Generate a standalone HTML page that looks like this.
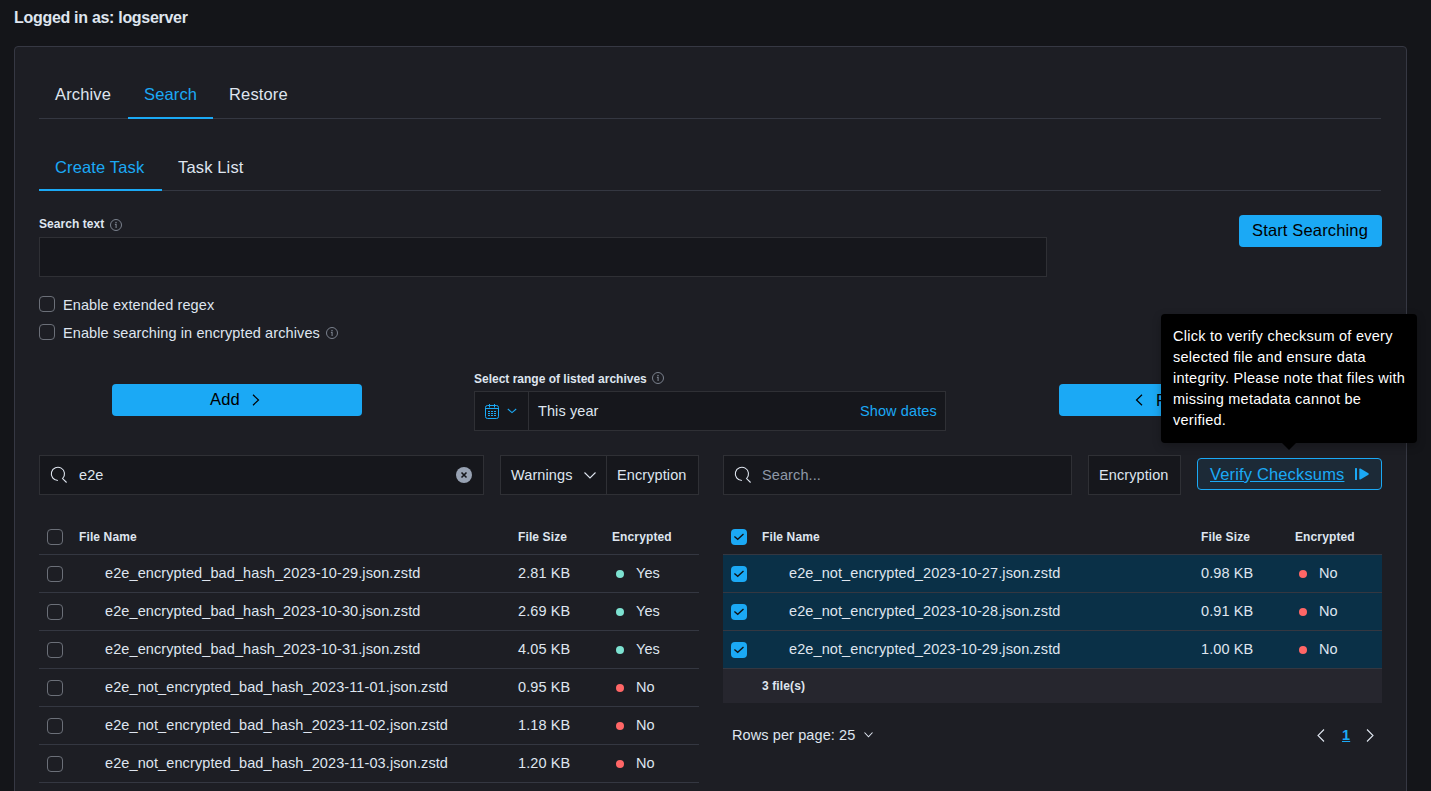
<!DOCTYPE html>
<html><head><meta charset="utf-8">
<style>
*{box-sizing:border-box;margin:0;padding:0}
html,body{width:1431px;height:791px;overflow:hidden;background:#141519;font-family:"Liberation Sans",sans-serif;color:#dfe5ef}
.a{position:absolute;white-space:nowrap}
svg{position:absolute;overflow:visible}
#hdr{left:14px;top:7.5px;font-size:16px;font-weight:bold;line-height:20px;letter-spacing:-0.3px}
#panel{left:14px;top:46px;width:1393px;height:800px;background:#1d1e24;border:1px solid #363843;border-radius:4px}
.t16{font-size:16.5px;line-height:20px;letter-spacing:.15px}
.line{background:#343741;height:1px}
.sel{color:#1ba9f5}
.uline{background:#1ba9f5;height:2px}
.b12{font-size:12px;font-weight:bold;line-height:16px;letter-spacing:.12px}
.input{background:#16171c;border:1px solid #2f3035}
.cb{width:16px;height:16px;border:1px solid #6b6f78;border-radius:4px;background:transparent}
.cbc{width:16px;height:16px;border-radius:4px;background:#1ba9f5}
.t14{font-size:14.5px;line-height:20px;letter-spacing:.1px}
.btn{background:#1ba9f5;border-radius:4px}
.dk{color:#000}
.tt{background:#000;border-radius:4px}
.tw{color:#fff;font-size:14.5px;line-height:21px;letter-spacing:.26px}
.rl{background:#343741;height:1px}
.dotg{width:8px;height:8px;border-radius:50%;background:#7de2d1}
.dotr{width:8px;height:8px;border-radius:50%;background:#ff6666}
.selrow{background:#0a3047}
</style></head><body>
<div id="hdr" class="a">Logged in as: logserver</div>
<div id="panel" class="a"></div>

<!-- tabs 1 -->
<div class="a t16" style="left:55px;top:84px">Archive</div>
<div class="a t16 sel" style="left:144px;top:84px">Search</div>
<div class="a t16" style="left:229px;top:84px">Restore</div>
<div class="a line" style="left:39px;top:118px;width:1342px"></div>
<div class="a uline" style="left:128px;top:117px;width:85px"></div>

<!-- tabs 2 -->
<div class="a t16 sel" style="left:55px;top:156.5px">Create Task</div>
<div class="a t16" style="left:178px;top:156.5px">Task List</div>
<div class="a line" style="left:39px;top:190px;width:1342px"></div>
<div class="a uline" style="left:39px;top:189px;width:123px"></div>

<div class="a b12" style="left:39px;top:216px;letter-spacing:.05px">Search text</div>
<svg style="left:110px;top:219px" width="12" height="12" viewBox="0 0 12 12"><circle cx="6" cy="6" r="5.5" fill="none" stroke="#7a818d" stroke-width="1"/><circle cx="6" cy="3.4" r=".75" fill="#7a818d"/><path d="M4.9 5.4h1.2v3.6" stroke="#7a818d" stroke-width="1.1" fill="none"/></svg>
<div class="a input" style="left:39px;top:237px;width:1008px;height:40px"></div>

<div class="a btn" style="left:1239px;top:215px;width:143px;height:32px"></div>
<div class="a t16 dk" style="left:1252px;top:220px">Start Searching</div>

<div class="a cb" style="left:39px;top:296px"></div>
<div class="a t14" style="left:63px;top:294.6px">Enable extended regex</div>
<div class="a cb" style="left:39px;top:324px"></div>
<div class="a t14" style="left:63px;top:323px">Enable searching in encrypted archives</div>
<svg style="left:326px;top:327px" width="12" height="12" viewBox="0 0 12 12"><circle cx="6" cy="6" r="5.5" fill="none" stroke="#7a818d" stroke-width="1"/><circle cx="6" cy="3.4" r=".75" fill="#7a818d"/><path d="M4.9 5.4h1.2v3.6" stroke="#7a818d" stroke-width="1.1" fill="none"/></svg>

<div class="a btn" style="left:112px;top:384px;width:250px;height:32px"></div>
<div class="a t16 dk" style="left:210px;top:389px">Add</div>
<svg style="left:252px;top:394px" width="8" height="12" viewBox="0 0 8 12"><path d="M1 0.8L6.5 6 1 11.2" fill="none" stroke="#000" stroke-width="1.2"/></svg>

<div class="a b12" style="left:474px;top:370.5px;letter-spacing:0">Select range of listed archives</div>
<svg style="left:652px;top:372px" width="12" height="12" viewBox="0 0 12 12"><circle cx="6" cy="6" r="5.5" fill="none" stroke="#7a818d" stroke-width="1"/><circle cx="6" cy="3.4" r=".75" fill="#7a818d"/><path d="M4.9 5.4h1.2v3.6" stroke="#7a818d" stroke-width="1.1" fill="none"/></svg>
<div class="a input" style="left:474px;top:391px;width:472px;height:40px"></div>
<div class="a" style="left:528px;top:392px;width:1px;height:38px;background:#2f3035"></div>
<svg style="left:485px;top:403px" width="14" height="17" viewBox="0 0 14 17"><rect x=".5" y="2.5" width="13" height="13" rx="2" fill="none" stroke="#1ba9f5"/><path d="M.5 5.5h13M4.5 1v3.5M9.5 1v3.5" stroke="#1ba9f5"/><path d="M3 8.5h2M6 8.5h2M9 8.5h2M3 10.5h2M6 10.5h2M9 10.5h2M3 12.5h2M6 12.5h2M9 12.5h2" stroke="#1ba9f5" stroke-width="1"/></svg>
<svg style="left:507px;top:408px" width="10" height="6" viewBox="0 0 10 6"><path d="M.8 1L5 4.6 9.2 1" fill="none" stroke="#1ba9f5" stroke-width="1.1"/></svg>
<div class="a t14" style="left:538px;top:401px">This year</div>
<div class="a t14 sel" style="left:860px;top:401px">Show dates</div>

<div class="a btn" style="left:1059px;top:384px;width:323px;height:32px"></div>
<svg style="left:1135px;top:394px" width="8" height="12" viewBox="0 0 8 12"><path d="M7 0.8L1.5 6 7 11.2" fill="none" stroke="#000" stroke-width="1.2"/></svg>
<div class="a t16 dk" style="left:1156px;top:389.5px">R</div>

<!-- left controls -->
<div class="a input" style="left:39px;top:455px;width:445px;height:40px"></div>
<svg style="left:50px;top:466px" width="17" height="17" viewBox="0 0 17 17"><path d="M7.9 14.45A6.6 6.6 0 1 1 12.57 12.52L16.6 16.5" fill="none" stroke="#dfe5ef" stroke-width="1.1"/></svg>
<div class="a t14" style="left:79px;top:465.3px">e2e</div>
<svg style="left:456px;top:467px" width="16" height="16" viewBox="0 0 16 16"><circle cx="8" cy="8" r="8" fill="#98a2b3"/><path d="M5.5 5.5l5 5M10.5 5.5l-5 5" stroke="#16171c" stroke-width="1.6"/></svg>

<div class="a input" style="left:500px;top:455px;width:199px;height:40px"></div>
<div class="a" style="left:606px;top:456px;width:1px;height:38px;background:#2f3035"></div>
<div class="a t14" style="left:511px;top:465.3px">Warnings</div>
<svg style="left:584px;top:472px" width="12" height="7" viewBox="0 0 12 7"><path d="M.5.5L6 6 11.5.5" fill="none" stroke="#dfe5ef" stroke-width="1.1"/></svg>
<div class="a t14" style="left:617px;top:465.3px">Encryption</div>

<!-- right controls -->
<div class="a input" style="left:723px;top:455px;width:349px;height:40px"></div>
<svg style="left:734px;top:466px" width="17" height="17" viewBox="0 0 17 17"><path d="M7.9 14.45A6.6 6.6 0 1 1 12.57 12.52L16.6 16.5" fill="none" stroke="#dfe5ef" stroke-width="1.1"/></svg>
<div class="a t14" style="left:762px;top:465.3px;color:#8e97a7">Search...</div>
<div class="a input" style="left:1088px;top:455px;width:93px;height:40px"></div>
<div class="a t14" style="left:1099px;top:465.3px">Encryption</div>

<div class="a" style="left:1197px;top:458px;width:185px;height:32px;border:1px solid #1ba9f5;border-radius:4px;background:#1c2a37"></div>
<div class="a t16 sel" style="left:1210px;top:464px;text-decoration:underline">Verify Checksums</div>
<svg style="left:1355px;top:468px" width="15" height="12" viewBox="0 0 15 12"><rect x="0" y="0" width="2" height="12" rx=".5" fill="#1ba9f5"/><path d="M4.3 1.2Q4.3 0 5.4.6L13.4 5.2Q14.4 6 13.4 6.8L5.4 11.4Q4.3 12 4.3 10.8Z" fill="#1ba9f5"/></svg>

<!-- tooltip -->
<div class="a tt" style="left:1161px;top:314px;width:256px;height:129px;box-shadow:0 3px 8px rgba(0,0,0,.25)"></div>
<svg style="left:1281px;top:442px" width="16" height="9" viewBox="0 0 16 9"><path d="M0 0H16L8 8Z" fill="#000"/></svg>
<div class="a tw" style="left:1173px;top:325.7px">Click to verify checksum of every<br>selected file and ensure data<br>integrity. Please note that files with<br>missing metadata cannot be<br>verified.</div>

<!-- LEFT TABLE -->
<div class="a cb" style="left:47px;top:529px"></div>
<div class="a b12" style="left:79px;top:529px">File Name</div>
<div class="a b12" style="left:518px;top:529px">File Size</div>
<div class="a b12" style="left:612px;top:529px">Encrypted</div>
<div class="a rl" style="left:39px;top:554px;width:660px"></div>

<div class="a cb" style="left:47px;top:566px"></div>
<div class="a t14" style="left:105px;top:563px">e2e_encrypted_bad_hash_2023-10-29.json.zstd</div>
<div class="a t14" style="left:518px;top:563px">2.81 KB</div>
<div class="a dotg" style="left:616px;top:570px"></div>
<div class="a t14" style="left:636px;top:563px">Yes</div>
<div class="a rl" style="left:39px;top:592px;width:660px"></div>

<div class="a cb" style="left:47px;top:604px"></div>
<div class="a t14" style="left:105px;top:601px">e2e_encrypted_bad_hash_2023-10-30.json.zstd</div>
<div class="a t14" style="left:518px;top:601px">2.69 KB</div>
<div class="a dotg" style="left:616px;top:608px"></div>
<div class="a t14" style="left:636px;top:601px">Yes</div>
<div class="a rl" style="left:39px;top:630px;width:660px"></div>

<div class="a cb" style="left:47px;top:642px"></div>
<div class="a t14" style="left:105px;top:639px">e2e_encrypted_bad_hash_2023-10-31.json.zstd</div>
<div class="a t14" style="left:518px;top:639px">4.05 KB</div>
<div class="a dotg" style="left:616px;top:646px"></div>
<div class="a t14" style="left:636px;top:639px">Yes</div>
<div class="a rl" style="left:39px;top:668px;width:660px"></div>

<div class="a cb" style="left:47px;top:680px"></div>
<div class="a t14" style="left:105px;top:677px">e2e_not_encrypted_bad_hash_2023-11-01.json.zstd</div>
<div class="a t14" style="left:518px;top:677px">0.95 KB</div>
<div class="a dotr" style="left:616px;top:684px"></div>
<div class="a t14" style="left:636px;top:677px">No</div>
<div class="a rl" style="left:39px;top:706px;width:660px"></div>

<div class="a cb" style="left:47px;top:718px"></div>
<div class="a t14" style="left:105px;top:715px">e2e_not_encrypted_bad_hash_2023-11-02.json.zstd</div>
<div class="a t14" style="left:518px;top:715px">1.18 KB</div>
<div class="a dotr" style="left:616px;top:722px"></div>
<div class="a t14" style="left:636px;top:715px">No</div>
<div class="a rl" style="left:39px;top:744px;width:660px"></div>

<div class="a cb" style="left:47px;top:756px"></div>
<div class="a t14" style="left:105px;top:753px">e2e_not_encrypted_bad_hash_2023-11-03.json.zstd</div>
<div class="a t14" style="left:518px;top:753px">1.20 KB</div>
<div class="a dotr" style="left:616px;top:760px"></div>
<div class="a t14" style="left:636px;top:753px">No</div>
<div class="a rl" style="left:39px;top:782px;width:660px"></div>

<!-- RIGHT TABLE -->
<div class="a cbc" style="left:731px;top:529px"></div>
<svg style="left:731px;top:529px" width="16" height="16" viewBox="0 0 16 16"><path d="M3.4 7.6L6.7 10.3 12.5 5.1" fill="none" stroke="#111" stroke-width="1.35"/></svg>
<div class="a b12" style="left:762px;top:529px">File Name</div>
<div class="a b12" style="left:1201px;top:529px">File Size</div>
<div class="a b12" style="left:1295px;top:529px">Encrypted</div>
<div class="a rl" style="left:723px;top:554px;width:659px"></div>

<div class="a selrow" style="left:723px;top:555px;width:659px;height:37px"></div>
<div class="a cbc" style="left:731px;top:566px"></div>
<svg style="left:731px;top:566px" width="16" height="16" viewBox="0 0 16 16"><path d="M3.4 7.6L6.7 10.3 12.5 5.1" fill="none" stroke="#111" stroke-width="1.35"/></svg>
<div class="a t14" style="left:789px;top:563px">e2e_not_encrypted_2023-10-27.json.zstd</div>
<div class="a t14" style="left:1201px;top:563px">0.98 KB</div>
<div class="a dotr" style="left:1299px;top:570px"></div>
<div class="a t14" style="left:1319px;top:563px">No</div>
<div class="a rl" style="left:723px;top:592px;width:659px"></div>

<div class="a selrow" style="left:723px;top:593px;width:659px;height:37px"></div>
<div class="a cbc" style="left:731px;top:604px"></div>
<svg style="left:731px;top:604px" width="16" height="16" viewBox="0 0 16 16"><path d="M3.4 7.6L6.7 10.3 12.5 5.1" fill="none" stroke="#111" stroke-width="1.35"/></svg>
<div class="a t14" style="left:789px;top:601px">e2e_not_encrypted_2023-10-28.json.zstd</div>
<div class="a t14" style="left:1201px;top:601px">0.91 KB</div>
<div class="a dotr" style="left:1299px;top:608px"></div>
<div class="a t14" style="left:1319px;top:601px">No</div>
<div class="a rl" style="left:723px;top:630px;width:659px"></div>

<div class="a selrow" style="left:723px;top:631px;width:659px;height:37px"></div>
<div class="a cbc" style="left:731px;top:642px"></div>
<svg style="left:731px;top:642px" width="16" height="16" viewBox="0 0 16 16"><path d="M3.4 7.6L6.7 10.3 12.5 5.1" fill="none" stroke="#111" stroke-width="1.35"/></svg>
<div class="a t14" style="left:789px;top:639px">e2e_not_encrypted_2023-10-29.json.zstd</div>
<div class="a t14" style="left:1201px;top:639px">1.00 KB</div>
<div class="a dotr" style="left:1299px;top:646px"></div>
<div class="a t14" style="left:1319px;top:639px">No</div>
<div class="a rl" style="left:723px;top:668px;width:659px"></div>

<div class="a" style="left:723px;top:669px;width:659px;height:34px;background:#26262e"></div>
<div class="a b12" style="left:762px;top:678px">3 file(s)</div>

<div class="a t14" style="left:732px;top:725px">Rows per page: 25</div>
<svg style="left:864px;top:732px" width="9" height="6" viewBox="0 0 9 6"><path d="M.5.5L4.5 4.8 8.5.5" fill="none" stroke="#dfe5ef" stroke-width="1.1"/></svg>
<svg style="left:1317px;top:729px" width="8" height="13" viewBox="0 0 8 13"><path d="M7 .5L1 6.5 7 12.5" fill="none" stroke="#dfe5ef" stroke-width="1.1"/></svg>
<div class="a t14 sel" style="left:1342px;top:725px;text-decoration:underline;font-weight:bold">1</div>
<svg style="left:1366px;top:729px" width="8" height="13" viewBox="0 0 8 13"><path d="M1 .5L7 6.5 1 12.5" fill="none" stroke="#dfe5ef" stroke-width="1.1"/></svg>
</body></html>
